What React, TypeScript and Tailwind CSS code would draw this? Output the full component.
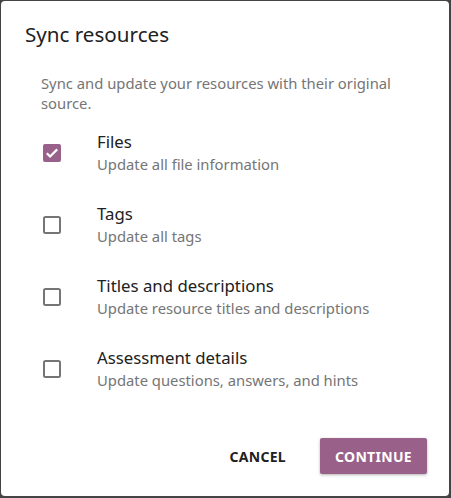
import React from "react";

const items = [
  { title: "Files", sub: "Update all file information", checked: true },
  { title: "Tags", sub: "Update all tags", checked: false },
  { title: "Titles and descriptions", sub: "Update resource titles and descriptions", checked: false },
  { title: "Assessment details", sub: "Update questions, answers, and hints", checked: false },
];

function Box({ checked }: { checked: boolean }) {
  if (checked) {
    return (
      <svg width="24" height="24" viewBox="0 0 24 24">
        <rect x="3" y="3" width="18" height="18" rx="2" fill="#996189" />
        <path d="M6.8 12.2l3.3 3.3L17.2 8.4" stroke="#fff" strokeWidth="2.2" fill="none" />
      </svg>
    );
  }
  return (
    <svg width="24" height="24" viewBox="0 0 24 24">
      <rect x="4" y="4" width="16" height="16" rx="1.5" fill="none" stroke="#757575" strokeWidth="2" />
    </svg>
  );
}

export default function App() {
  return (
    <div className="w-[451px] h-[498px] bg-[#444444] pl-px pt-px pr-[2px] pb-[2px]" style={{ fontFamily: '"Noto Sans", sans-serif' }}>
      <div className="w-full h-full bg-white rounded-[4px] flex flex-col">
        <div className="pl-6 pt-[17px] text-[20.6px] leading-8 text-[#212121]">Sync resources</div>
        <div className="pl-10 pr-6 mt-[23px] text-[14.8px] leading-5 text-[#757575]">
          Sync and update your resources with their original source.
        </div>
        <div className="flex flex-col mt-[26px] pl-[39px]">
          {items.map((it) => (
            <div key={it.title} className="flex h-[72px]">
              <div className="pt-[2px]">
                <Box checked={it.checked} />
              </div>
              <div className="ml-[33px] -mt-[9px]">
                <div className="text-[16.8px] leading-6 text-[#212121]">{it.title}</div>
                <div className="text-[14.8px] leading-5 text-[#757575]">{it.sub}</div>
              </div>
            </div>
          ))}
        </div>
        <div className="mt-auto flex justify-end items-center gap-[18px] pr-[22px] pb-[22px]">
          <button className="h-9 px-4 text-[14px] font-bold text-[#212121] tracking-[0.3px]">CANCEL</button>
          <button className="h-9 w-[107px] rounded-[2px] bg-[#996189] text-white text-[14px] font-bold tracking-[0.3px] shadow-[0_1px_3px_rgba(0,0,0,0.3)]">
            CONTINUE
          </button>
        </div>
      </div>
    </div>
  );
}
